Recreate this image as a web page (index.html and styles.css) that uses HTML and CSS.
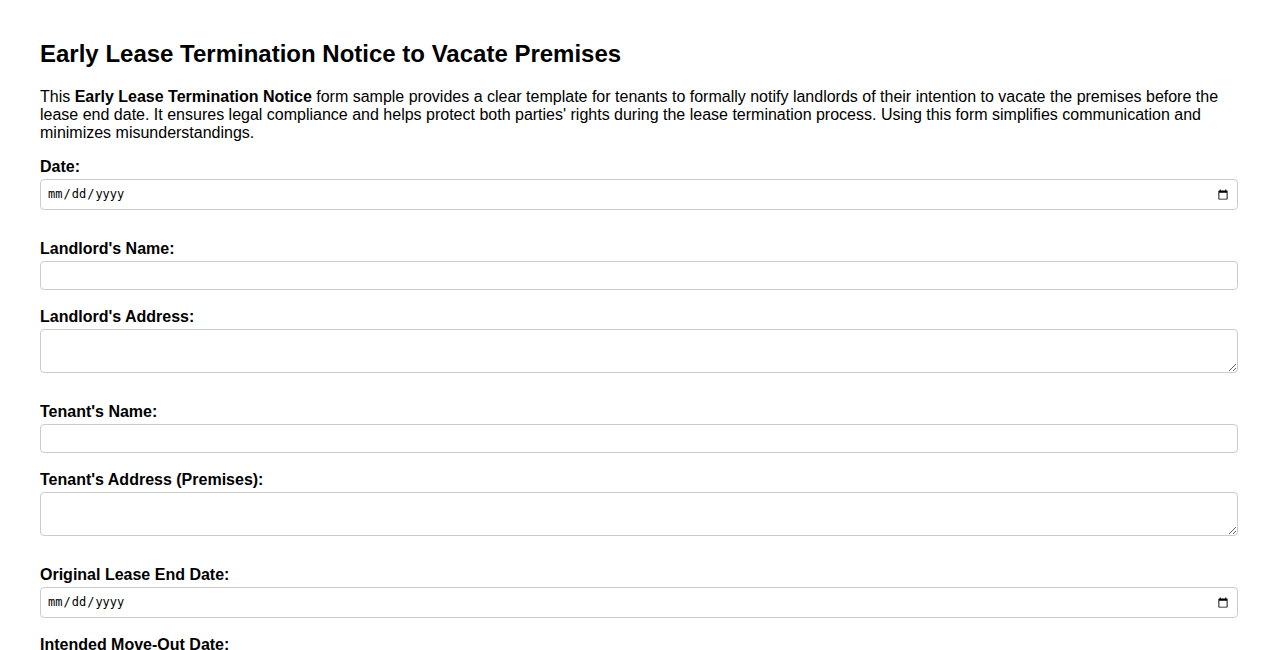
FILE: index.html
```html
<!DOCTYPE html>
<html lang="en">
<head>
<meta charset="utf-8">
<title>Early Lease Termination Notice to Vacate Premises</title>
<link rel="stylesheet" href="styles.css">
</head>
<body>
<h1 class="title">Early Lease Termination Notice to Vacate Premises</h1>
<p class="intro">This <strong>Early Lease Termination Notice</strong> form sample provides a clear template for tenants to formally notify landlords of their intention to vacate the premises before the lease end date. It ensures legal compliance and helps protect both parties' rights during the lease termination process. Using this form simplifies communication and minimizes misunderstandings.</p>
<form class="form">
  <div class="field field-wide">
    <label class="label" for="date">Date:</label>
    <input class="control control-date" type="date" id="date">
  </div>
  <div class="field">
    <label class="label" for="lname">Landlord's Name:</label>
    <input class="control" type="text" id="lname">
  </div>
  <div class="field field-wide">
    <label class="label" for="laddr">Landlord's Address:</label>
    <textarea class="control control-area" id="laddr" rows="2"></textarea>
  </div>
  <div class="field">
    <label class="label" for="tname">Tenant's Name:</label>
    <input class="control" type="text" id="tname">
  </div>
  <div class="field field-wide">
    <label class="label" for="taddr">Tenant's Address (Premises):</label>
    <textarea class="control control-area" id="taddr" rows="2"></textarea>
  </div>
  <div class="field">
    <label class="label" for="oend">Original Lease End Date:</label>
    <input class="control control-date" type="date" id="oend">
  </div>
  <div class="field">
    <label class="label" for="move">Intended Move-Out Date:</label>
    <input class="control control-date" type="date" id="move">
  </div>
</form>
</body>
</html>
```
FILE: styles.css
```css
html, body {
  background: #fff;
}
body {
  margin: 40px;
  font-family: "Liberation Sans", Arial, sans-serif;
  font-size: 16px;
  color: #000;
}
.title {
  font-size: 24px;
  font-weight: bold;
  margin: 0 0 21px;
  line-height: 27px;
}
.intro {
  margin: 0 0 15px;
  line-height: 18px;
}
.form {
  display: flex;
  flex-direction: column;
}
.field {
  display: flex;
  flex-direction: column;
  margin-bottom: 17px;
}
.field-wide {
  margin-bottom: 29px;
}
.label {
  font-weight: bold;
  line-height: 18px;
  padding-top: 1px;
  margin-bottom: 3px;
}
.control {
  box-sizing: border-box;
  width: 100%;
  margin: 0;
  padding: 6px;
  border: 1px solid #ccc;
  border-radius: 4px;
  font-family: "Liberation Sans", Arial, sans-serif;
  font-size: 13.333px;
  line-height: 15px;
  height: 29px;
  background: #fff;
}
.control-date {
  height: 31px;
  font-family: "DejaVu Sans Mono", monospace;
  font-size: 12px;
}
.control-area {
  height: 44px;
  resize: both;
  font-family: "Liberation Mono", monospace;
}
```
